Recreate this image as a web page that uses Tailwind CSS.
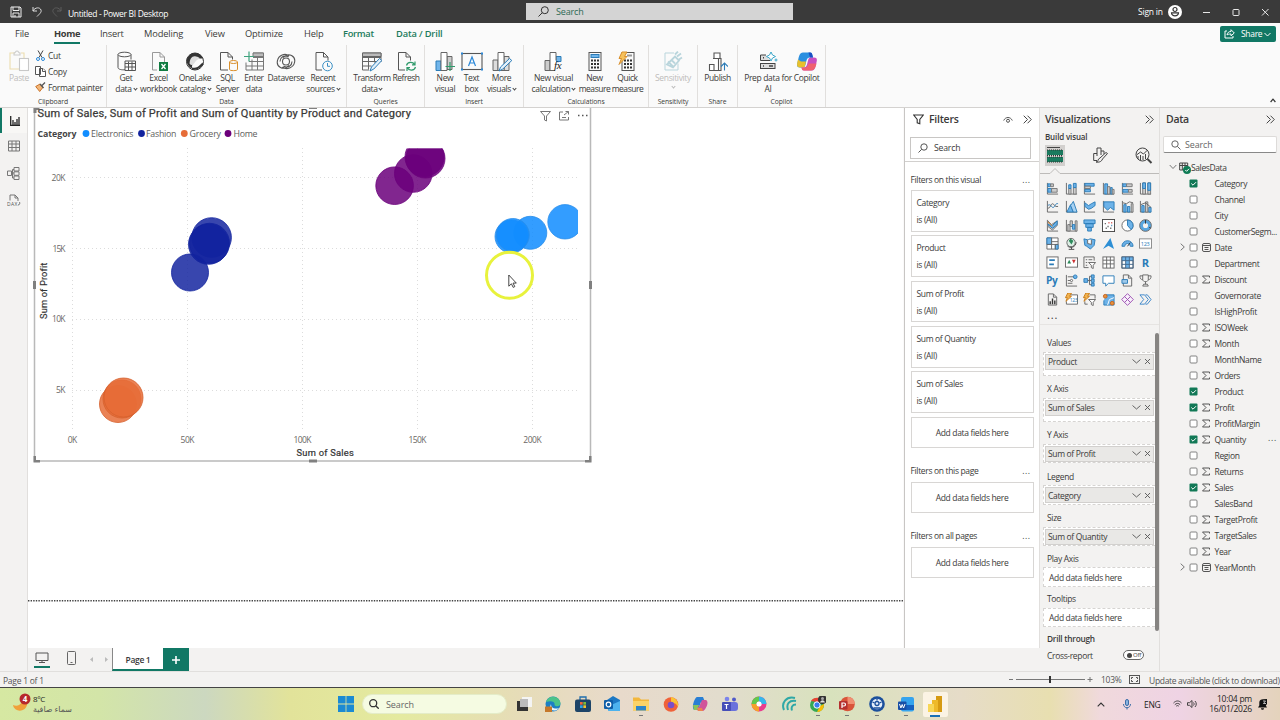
<!DOCTYPE html>
<html lang="en">
<head>
    <meta charset="UTF-8">
    <meta name="viewport" content="width=device-width, initial-scale=1.0">
    <title>Untitled - Power BI Desktop</title>
    <script src="https://cdn.jsdelivr.net/npm/@tailwindcss/browser@4"></script>
</head>
<body class="w-[1280px] h-[720px] overflow-hidden flex flex-col bg-[#f3f2f1] text-[#3b3a39] text-[8.500px] leading-[11px] tracking-[-0.340px] font-['Open_Sans','Noto_Sans',sans-serif]">

    <!-- Title bar -->
    <header class="relative h-[23px] shrink-0 bg-[#3a3a3a] text-white flex items-center">
        <svg class="ml-[10px] w-[12px] h-[12px]" viewBox="0 0 12 12" fill="none" stroke="#eee" stroke-width="1"><path d="M1 1h9l1 1v9H1zM3 1v3.500h6V1M3 11V7h6v4M5 9v2"/></svg>
        <svg class="ml-[10px] w-[10px] h-[12px]" viewBox="0 0 10 12" fill="none" stroke="#ddd" stroke-width="1"><path d="M1 1v4h4M1 5c2-4 7-4 8-1 .6 2-.5 3-4 6.500"/></svg>
        <svg class="ml-[10px] w-[10px] h-[12px]" viewBox="0 0 10 12" fill="none" stroke="#5c5c5c" stroke-width="1"><path d="M9 1v4H5M9 5C7 1 2 1 1 4c-.6 2 .5 3 4 6.500"/></svg>
        <span class="ml-[6px] mt-[3px] w-[99px] text-[8.500px] tracking-[-0.330px] whitespace-nowrap">Untitled - Power BI Desktop</span>
        <div class="ml-[359px] w-[267px] h-[17px] bg-[#d4d4d4] flex items-center text-[#2d6a55] text-[9px] tracking-[-0.150px]">
            <svg class="ml-[12px] mr-[7px] w-[11px] h-[11px]" viewBox="0 0 11 11" fill="none" stroke="#333" stroke-width="1"><circle cx="6.800" cy="4.200" r="3.500"/><path d="M4.300 6.700L.5 10.500"/></svg>
            Search
        </div>
        <span class="ml-[345px] w-[25px] tracking-[-0.200px] whitespace-nowrap">Sign in</span>
        <svg class="ml-[5px] w-[14px] h-[14px]" viewBox="0 0 14 14"><circle cx="7" cy="7" r="7" fill="#fff"/><g fill="none" stroke="#333" stroke-width="1.200"><circle cx="7" cy="4.500" r="2"/><path d="M3.500 7.800h7c.2 4-7.200 4-7 0z"/></g></svg>
        <svg class="ml-[20px] w-[70px] h-[10px]" viewBox="0 0 70 10" fill="none" stroke="#e8e8e8" stroke-width="1"><path d="M1 5.500h7M60 2l6.500 6.500M66.500 2L60 8.500"/><rect x="31" y="2.500" width="6" height="6" rx=".8"/></svg>
    </header>

    <!-- Ribbon -->
    <section class="h-[85px] shrink-0 bg-[#fafafa] border-b border-[#d4d2d0] flex flex-col">
        <nav class="relative h-[22px] flex items-center text-[9.300px] leading-[20px] tracking-[-0.150px] whitespace-nowrap">
            <span class="ml-[15px] w-[39px]">File</span>
            <span class="w-[46px] font-bold tracking-[-0.300px]"><span class="inline-block w-[26px] h-[20px] border-b-2 border-[#117865]">Home</span></span>
            <span class="w-[44px] tracking-[-0.250px]">Insert</span>
            <span class="w-[61px]">Modeling</span>
            <span class="w-[40px]">View</span>
            <span class="w-[59px]">Optimize</span>
            <span class="w-[39px]">Help</span>
            <span class="w-[53px] font-semibold tracking-[-0.300px] text-[#217a5b]">Format</span>
            <span class="font-semibold text-[#217a5b]">Data / Drill</span>
            <div class="ml-auto mr-[4px] w-[56px] h-[16px] rounded-[2px] bg-[#117865] text-white text-[8.500px] flex items-center">
                <svg class="ml-[4px] mr-[6px] w-[11px] h-[10px]" viewBox="0 0 11 10" fill="none" stroke="#fff" stroke-width="1"><path d="M3 2H1v7h8V7M3 6c.4-2.600 2-3.500 4-3.500V.7L10.300 4 7 6.800V5C5 5 4 5.200 3 6z"/></svg>
                <span class="w-[20px] tracking-[-0.300px]">Share</span>
                <svg class="ml-[3px] w-[7px] h-[5px]" viewBox="0 0 7 5" fill="none" stroke="#fff" stroke-width="1"><path d="M.5 1l3 3 3-3"/></svg>
            </div>
        </nav>
        <div class="relative h-[62px] flex text-center whitespace-nowrap">
            <!-- Clipboard -->
            <div class="w-[107px] border-r border-[#e1dfdd] flex flex-col">
                <div class="h-[52px] flex">
                    <div class="ml-[5px] w-[28px] pt-[5px] flex flex-col items-center text-[#bebcba]">
                        <svg class="w-[22px] h-[22px]" viewBox="0 0 22 22" fill="none" stroke-width="1.100"><path d="M7 3H2v16h9M13 3h3v5" stroke="#ecdcae"/><path d="M6 5V3c2 0 1-2 3-2s1 2 3 2v2z" stroke="#ccc"/><rect x="11.500" y="8.500" width="9" height="12" stroke="#c8c8c8" fill="#fff"/></svg>
                        <span>Paste</span>
                    </div>
                    <div class="ml-[2px] pt-[2px] flex flex-col text-left">
                        <div class="h-[16px] flex items-center"><svg class="w-[11px] h-[11px] mr-[2px]" viewBox="0 0 11 11" fill="none" stroke-width="1"><path d="M3 .5l4 7M8 .5l-4 7" stroke="#444"/><circle cx="3" cy="9" r="1.500" stroke="#2b88d8"/><circle cx="8" cy="9" r="1.500" stroke="#2b88d8"/></svg>Cut</div>
                        <div class="h-[16px] flex items-center"><svg class="w-[11px] h-[11px] mr-[2px]" viewBox="0 0 11 11" fill="#fff" stroke="#555" stroke-width="1"><path d="M.5.5h5v8h-5zM4.500 2.500h3.500l2.500 2.500v5.500h-6z"/><path d="M7.500 2.500V5.500h3"/></svg>Copy</div>
                        <div class="h-[16px] flex items-center"><svg class="w-[11px] h-[11px] mr-[2px]" viewBox="0 0 11 11" fill="#f3b678" stroke="#c56a1c" stroke-width=".9"><path d="M.7 4.500l4 5 3.500-4.500L5 2z"/><path d="M5 2l3.500 4M7 3.500l3-3" stroke="#555" stroke-width="1.300"/></svg>Format painter</div>
                    </div>
                </div>
                <span class="pt-[1px] text-[6.800px] leading-[10px] tracking-[-0.100px]">Clipboard</span>
            </div>
            <!-- Data -->
            <div class="w-[240px] border-r border-[#e1dfdd] flex flex-col">
                <div class="h-[52px] pl-[3px] pt-[6px] flex">
                    <div class="w-[32px] flex flex-col items-center"><svg class="w-[20px] h-[21px] shrink-0" viewBox="0 0 20 20" fill="#fafafa" stroke="#555" stroke-width="1"><path d="M2 3v13c0 2 4 2.500 7 2.300M15 3v5"/><ellipse cx="8.500" cy="3" rx="6.500" ry="2.300"/><path d="M9 9.500h10.500v9.500H9z"/><path d="M9 12h10.500M9 15.500h10.500M12.500 10v9M16 10v9"/></svg><span>Get<br>data<i class="inline-block ml-[2px] mb-[2px] w-[3px] h-[3px] border-r border-b border-[#444] rotate-45"></i></span></div>
                    <div class="w-[33px] flex flex-col items-center"><svg class="w-[20px] h-[21px] shrink-0" viewBox="0 0 20 20" fill="none" stroke="#999" stroke-width="1"><path d="M8 18.500H3.500V1H11l4.500 4.500v6"/><path d="M11 1v4.500h4.500"/><rect x="10" y="10.500" width="9" height="9" fill="#107c41" stroke="none"/><path d="M12.500 12.500l4 5M16.500 12.500l-4 5" stroke="#fff" stroke-width="1.300"/></svg><span>Excel<br>workbook</span></div>
                    <div class="w-[40px] flex flex-col items-center"><svg class="w-[20px] h-[21px] shrink-0" viewBox="0 0 20 20" fill="none"><circle cx="10" cy="10" r="8.500" fill="#fafafa" stroke="#333"/><path d="M5 3c5-3 11-1 13 4-4 0-6 0-8 2-3 3-3 5-3 8C3 15 1 11 2 7z" fill="#333"/><path d="M11 5c-4-1-6 2-6.500 7 1.500 2 3 2 4.500 0 2-2 2-4 6-5-1-1-2-2-4-2z" fill="#ddd"/><path d="M7 17c5 1 7-1 11-5" stroke="#333" stroke-width="2"/></svg><span>OneLake<br>catalog<i class="inline-block ml-[2px] mb-[2px] w-[3px] h-[3px] border-r border-b border-[#444] rotate-45"></i></span></div>
                    <div class="w-[25px] flex flex-col items-center"><svg class="w-[20px] h-[21px] shrink-0" viewBox="0 0 20 20" fill="none" stroke="#555" stroke-width="1"><path d="M10 18.500H2.500V1H10l4.500 4.500V8M10 1v4.500h4.500"/><path d="M11.500 10.500v7.500c0 1.500 8 1.500 8 0v-7.500" stroke="#d98f2b"/><ellipse cx="15.500" cy="10.500" rx="4" ry="1.500" stroke="#d98f2b"/></svg><span>SQL<br>Server</span></div>
                    <div class="w-[28px] flex flex-col items-center"><svg class="w-[20px] h-[21px] shrink-0" viewBox="0 0 20 20" fill="none" stroke="#777" stroke-width="1"><path d="M9 1.500h10.500v17H2V11M19.500 6H9M19.500 10H5M19.500 14.500H2M8 8v10.500M13.500 5v13.500"/><path d="M9 1.500h10.500V5H9z" fill="#bbb"/><path d="M5 0v10M0 5h10" stroke="#3fa37e" stroke-width="1.200"/></svg><span>Enter<br>data</span></div>
                    <div class="w-[36px] flex flex-col items-center"><svg class="w-[20px] h-[21px] shrink-0" viewBox="0 0 20 20" fill="none" stroke="#555" stroke-width="1.100"><circle cx="10" cy="10" r="3.500"/><path d="M13 14C7 20 0 15 1.500 9 2.500 4 9 1 13 4.500M7 6c6-6 13-1 11.500 5-1 5-8 8-12 4.500M4 10c0-4 4-7 8.500-4.500M16 10c0 4-4 7-8.500 4.500"/></svg><span>Dataverse</span></div>
                    <div class="w-[38px] flex flex-col items-center"><svg class="w-[20px] h-[21px] shrink-0" viewBox="0 0 20 20" fill="none" stroke="#555" stroke-width="1"><path d="M9 18.500H3V1h7.500L15 5.500V9M10.500 1v4.500H15"/><circle cx="14.500" cy="14.500" r="4.800" fill="#fafafa" stroke="#3a8fc4"/><path d="M14.500 11.500v3.300h2.500" stroke="#3a8fc4"/></svg><span>Recent<br>sources<i class="inline-block ml-[2px] mb-[2px] w-[3px] h-[3px] border-r border-b border-[#444] rotate-45"></i></span></div>
                </div>
                <span class="pt-[1px] text-[6.800px] leading-[10px] tracking-[-0.100px]">Data</span>
            </div>
            <!-- Queries -->
            <div class="w-[78px] border-r border-[#e1dfdd] flex flex-col">
                <div class="h-[52px] pl-[5px] pt-[6px] flex">
                    <div class="w-[40px] flex flex-col items-center"><svg class="w-[20px] h-[21px] shrink-0" viewBox="0 0 20 20" fill="none" stroke="#666" stroke-width="1"><path d="M.5 1.500h18.500v9M.5 1.500v17H7M.5 6H19M.5 10h14M.5 14.500h9M6.500 5v13M12.500 5v6"/><path d="M.5 1.500H19V5H.5z" fill="#bbb"/><path d="M8 19.500l1.500-4L17.500 7l2.300 2-8 8.500z" fill="#e3f0fa" stroke="#2b7cb8"/></svg><span class="tracking-[-0.450px]">Transform<br>data<i class="inline-block ml-[2px] mb-[2px] w-[3px] h-[3px] border-r border-b border-[#444] rotate-45"></i></span></div>
                    <div class="w-[28px] flex flex-col items-center"><svg class="w-[20px] h-[21px] shrink-0" viewBox="0 0 20 20" fill="none" stroke="#555" stroke-width="1"><path d="M9 18.500H2.500V1H10l4.500 4.500V9M10 1v4.500h4.500"/><path d="M10.500 14c1-4 6.500-4 8-1M19 10v3.300h-3M19.500 15.500c-1 4-6.500 4-8 1M11 19.500v-3.300h3" stroke="#2f9a6b" stroke-width="1.200"/></svg><span class="tracking-[-0.450px]">Refresh</span></div>
                </div>
                <span class="pt-[1px] text-[6.800px] leading-[10px] tracking-[-0.100px]">Queries</span>
            </div>
            <!-- Insert -->
            <div class="w-[99px] border-r border-[#e1dfdd] flex flex-col">
                <div class="h-[52px] pl-[6px] pt-[6px] flex">
                    <div class="w-[28px] flex flex-col items-center"><svg class="w-[20px] h-[21px] shrink-0" viewBox="0 0 20 20" fill="none" stroke="#666" stroke-width="1"><path d="M1 9.500h5v9.500H1z" fill="#71b5ea" stroke="#2b7cb8"/><path d="M12 5h5v13h-5z" fill="#ccc"/><path d="M6 1h6v18H6z" fill="#fff"/><path d="M15 10.500v9M10.500 15h9.500" stroke="#2f9a6b" stroke-width="1.200"/></svg><span>New<br>visual</span></div>
                    <div class="w-[25px] flex flex-col items-center"><svg class="w-[22px] h-[21px] shrink-0" viewBox="0 0 22 20" fill="none" stroke="#555" stroke-width="1.100"><rect x="1" y="2" width="20" height="16"/><path d="M7.500 14.500L11 5.500l3.500 9M8.700 11.500h4.600" stroke="#2b88d8" stroke-width="1.200"/><path d="M0 1h2v2H0zM20 1h2v2h-2zM0 17h2v2H0zM20 17h2v2h-2z" fill="#2b88d8" stroke="none"/></svg><span>Text<br>box</span></div>
                    <div class="w-[35px] flex flex-col items-center"><svg class="w-[20px] h-[21px] shrink-0" viewBox="0 0 20 20" fill="none" stroke="#666" stroke-width="1"><path d="M1 8.500h5v10.500H1z" fill="#ddd"/><path d="M12 5h5v14h-5z" fill="#ddd"/><path d="M6 1h6v18H6z" fill="#fff"/><path d="M7 19.500l1.500-4L17.500 7l2.300 2-9 8.500z" fill="#e3f0fa" stroke="#2b7cb8"/></svg><span>More<br>visuals<i class="inline-block ml-[2px] mb-[2px] w-[3px] h-[3px] border-r border-b border-[#444] rotate-45"></i></span></div>
                </div>
                <span class="pt-[1px] text-[6.800px] leading-[10px] tracking-[-0.100px]">Insert</span>
            </div>
            <!-- Calculations -->
            <div class="w-[125px] border-r border-[#e1dfdd] flex flex-col">
                <div class="h-[52px] pl-[5px] pt-[6px] flex">
                    <div class="w-[49px] flex flex-col items-center"><svg class="w-[20px] h-[21px] shrink-0" viewBox="0 0 20 20" fill="none" stroke="#666" stroke-width="1"><path d="M1 9h5v10H1z" fill="#ccc"/><path d="M12 5h5v5h-5z" fill="#71b5ea" stroke="#2b7cb8"/><path d="M11 19H6V1h6v8" fill="#fff"/><text x="10" y="17.500" font-size="11" font-style="italic" font-family="Liberation Serif" fill="#222" stroke="none">fx</text></svg><span>New visual<br>calculation<i class="inline-block ml-[2px] mb-[2px] w-[3px] h-[3px] border-r border-b border-[#444] rotate-45"></i></span></div>
                    <div class="w-[33px] flex flex-col items-center"><svg class="w-[20px] h-[21px] shrink-0" viewBox="0 0 20 20" fill="none" stroke="#555" stroke-width="1"><rect x="4" y="1" width="12" height="18"/><rect x="6" y="3" width="8" height="3" fill="#71b5ea" stroke="#2b7cb8"/><path d="M6 9h8M6 12.500h8M6 16h8" stroke="#333" stroke-width="2" stroke-dasharray="2 1"/></svg><span class="tracking-[-0.450px]">New<br>measure</span></div>
                    <div class="w-[33px] flex flex-col items-center"><svg class="w-[20px] h-[21px] shrink-0" viewBox="0 0 20 20" fill="none" stroke="#555" stroke-width="1"><rect x="4" y="1" width="12" height="18"/><path d="M9 4h5" stroke="#999" stroke-width="2"/><path d="M6 9h8M6 12.500h8M6 16h8" stroke="#333" stroke-width="2" stroke-dasharray="2 1"/><path d="M4 .5h5L6.500 5H9L1 13l2.500-6H1z" fill="#f6c15c" stroke="#d98f2b"/></svg><span class="tracking-[-0.450px]">Quick<br>measure</span></div>
                </div>
                <span class="pt-[1px] text-[6.800px] leading-[10px] tracking-[-0.100px]">Calculations</span>
            </div>
            <!-- Sensitivity -->
            <div class="w-[49px] border-r border-[#e1dfdd] flex flex-col">
                <div class="h-[52px] pt-[6px] flex flex-col items-center text-[#bebcba]">
                    <svg class="w-[20px] h-[21px] shrink-0" viewBox="0 0 20 20" fill="none" stroke="#b9d5dc" stroke-width="1"><path d="M11 1.500H2v17h13V12"/><path d="M4 13l8-8 4 4-6 7zM5 10l5 5M8 8l4 4M12 3l3-3M14 5l4-3M16 8l3-2" stroke-width="1.800"/></svg>
                    <span>Sensitivity</span><i class="mt-[2px] w-[3px] h-[3px] border-r border-b border-[#bbb] rotate-45"></i>
                </div>
                <span class="pt-[1px] text-[6.800px] leading-[10px] tracking-[-0.100px]">Sensitivity</span>
            </div>
            <!-- Share -->
            <div class="w-[40px] border-r border-[#e1dfdd] flex flex-col">
                <div class="h-[52px] pt-[6px] flex flex-col items-center">
                    <svg class="w-[20px] h-[21px] shrink-0" viewBox="0 0 20 20" fill="#fff" stroke="#555" stroke-width="1.100"><path d="M1.500 13h4.500v6H1.500zM5 7h5.500v12H6M6 6.500V1.500h6v5M10.500 7H13v12h-3"/><path d="M16.500 19v-7M13 15l3.500-3.500L20 15" fill="none" stroke="#2b7cb8"/></svg>
                    <span>Publish</span>
                </div>
                <span class="pt-[1px] text-[6.800px] leading-[10px] tracking-[-0.100px]">Share</span>
            </div>
            <!-- Copilot -->
            <div class="w-[88px] border-r border-[#e1dfdd] flex flex-col">
                <div class="h-[52px] pl-[5px] pt-[6px] flex">
                    <div class="w-[50px] flex flex-col items-center"><svg class="w-[20px] h-[21px] shrink-0" viewBox="0 0 20 20" fill="#ddd" stroke="#444" stroke-width="1"><path d="M8 3.500H2.500V9H12"/><rect x="2.500" y="12" width="14.500" height="5"/><path d="M5 6.300h1M11 14.500h4M5 14.500h1" stroke-width="1.400"/><path d="M13 .5l1.500 3 3 1.500-3 1.500-1.500 3-1.500-3-3-1.500 3-1.500zM18 7v3M16.500 8.500h3" fill="#fff" stroke="#3aa6c9"/></svg><span>Prep data for<br>AI</span></div>
                    <div class="w-[27px] flex flex-col items-center"><svg class="w-[22px] h-[21px] shrink-0" viewBox="0 0 22 20"><path d="M7 1h7c2 0 2 1 2.500 3l.5 2h-3c-2 0-3 1-3.500 3l-1 4c-.5 2-1 3-3 3H4c-4 0-3-3-2-7S3.500 1 7 1z" fill="#2a8fe0"/><path d="M2 8c-1 4-2 8 2 8h3c2 0 2-2 3-6H5z" fill="#e8c02c"/><path d="M15 19H8c-2 0-2-1-2.500-3h2c2 0 3-1 3.500-3l1-4c.5-2 1-3 3-3h3c4 0 3 3 2 7s-1.500 6-5 6z" fill="#c74fc0"/><path d="M20.500 12c-1 4-2 7-5.500 7H8c-2 0-2-1-2.500-3H9c3 0 3-4 4-4z" fill="#f0626f"/><path d="M12.500 1H14c2 0 2 1 2.500 3l.5 2h-3z" fill="#1a4fc4"/></svg><span>Copilot</span></div>
                </div>
                <span class="pt-[1px] text-[6.800px] leading-[10px] tracking-[-0.100px]">Copilot</span>
            </div>
            <svg class="ml-auto mt-[53px] mr-[4px] w-[6px] h-[5px]" viewBox="0 0 6 5" fill="none" stroke="#333" stroke-width="1.200"><path d="M.6 4L3 1.200 5.400 4"/></svg>
        </div>
    </section>

    <!-- Workspace -->
    <main class="h-[563px] shrink-0 flex">
        <aside class="w-[28px] shrink-0 border-r border-[#e1dfdd] flex flex-col items-center">
            <div class="w-full h-[25px] border-l-2 border-[#117865] bg-[#f8f7f5] flex items-center justify-center"><svg class="w-[10px] h-[10px]" viewBox="0 0 10 10" stroke="#222" stroke-width="1.300" fill="none"><path d="M.7 0v9.300H10M3 9V4M5 9V6M7 9V3M9 9V1"/></svg></div>
            <svg class="mt-[7px] w-[12px] h-[12px]" viewBox="0 0 12 12" fill="none" stroke="#777" stroke-width="1"><path d="M.5 1h11v10H.5zM.5 4h11M.5 7.500h11M4 1v10M8 1v10"/></svg>
            <svg class="mt-[15px] w-[13px] h-[13px]" viewBox="0 0 13 13" fill="none" stroke="#777" stroke-width="1"><path d="M7 .5h5v3.500H7zM7 4.800h5v3.500H7zM7 9h5v3.500H7zM.5 4h4v4.500h-4zM4.500 6H7M5.500 2.500H7M5.500 2.500v8.500H7"/></svg>
            <svg class="mt-[14px] w-[14px] h-[13px]" viewBox="0 0 14 13" fill="none" stroke="#777" stroke-width="1"><path d="M3 6.500V1h5l3 3v3M8 1v3h3"/><text x="0" y="11.500" font-size="5" fill="#555" stroke="none" font-family="Open Sans" textLength="10">DAX</text><path d="M11 11c2 0 2-2 1.500-3"/></svg>
        </aside>

        <section class="w-[877px] shrink-0 flex flex-col">
            <!-- Scatter chart on the report canvas -->
            <svg class="w-[877px] h-[540px] bg-white" viewBox="28 108 877 540" font-family="Roboto, 'Open Sans', sans-serif">
                <defs><clipPath id="plot"><rect x="72" y="148.500" width="506" height="283"/></clipPath></defs>
                <path d="M34.500 108v353H590.500V108" fill="none" stroke="#b9b9b9" stroke-width="1.500"/>
                <g fill="#808080"><path d="M33.500 107h6v3h-3v3h-3zM309 107h8v2h-8zM33.500 456h2.500v4h4v2.500h-6.500zM309 459.500h8v3h-8zM591.500 456v6.500h-6.500v-2.500h4V456zM33 281h3v8h-3zM589 281h3v8h-3z"/></g>
                <text x="37.500" y="117.300" font-size="11" font-weight="400" fill="#3a3938" stroke="#3a3938" stroke-width=".25" textLength="373" lengthAdjust="spacing">Sum of Sales, Sum of Profit and Sum of Quantity by Product and Category</text>
                <g fill="none" stroke="#777" stroke-width="1"><path d="M540.500 111.500h10l-4 4.500v5l-2-1v-4z"/><path d="M563 112h-3.500v8h9v-3M562 117.500h4M564 115l4.500-3.500M565.500 111.500h3v3"/></g>
                <path d="M578 115.500h1.500M582 115.500h1.500M586 115.500h1.500" stroke="#555" stroke-width="1.400"/>
                <g font-family="'Open Sans', sans-serif" font-size="8.800" fill="#605e5c" letter-spacing="0">
                    <text x="37.500" y="136.500" font-weight="700" fill="#444" textLength="39">Category</text>
                    <circle cx="86" cy="133.500" r="3.400" fill="#118dff"/><text x="91" y="136.500" textLength="42.500">Electronics</text>
                    <circle cx="141.500" cy="133.500" r="3.400" fill="#12239e"/><text x="146" y="136.500" textLength="30.500">Fashion</text>
                    <circle cx="184.300" cy="133.500" r="3.400" fill="#e66c37"/><text x="189.500" y="136.500" textLength="31.500">Grocery</text>
                    <circle cx="228" cy="133.500" r="3.400" fill="#6b007b"/><text x="233.500" y="136.500" textLength="24">Home</text>
                </g>
                <g stroke="#dcdcdc" stroke-width="1" stroke-dasharray="1 3"><path d="M72.500 148v282M187.500 148v282M302.500 148v282M417.500 148v282M532.500 148v282M72 177.500h506M72 248.500h506M72 319.500h506M72 390.500h506"/></g>
                <g font-family="'Open Sans', sans-serif" font-size="8.500" fill="#6a6866" letter-spacing="0">
                    <g text-anchor="end"><text x="65.500" y="180.800" textLength="14">20K</text><text x="65.500" y="251.500" textLength="13">15K</text><text x="65.500" y="322.300" textLength="13.500">10K</text><text x="65.500" y="393" textLength="9.500">5K</text></g>
                    <g text-anchor="middle"><text x="72.500" y="443.300" textLength="9.500">0K</text><text x="187.500" y="443.300" textLength="14">50K</text><text x="302.500" y="443.300" textLength="18">100K</text><text x="417.500" y="443.300" textLength="18">150K</text><text x="532.500" y="443.300" textLength="18.500">200K</text></g>
                </g>
                <g font-size="9.300" fill="#333" stroke="#333" stroke-width=".2" text-anchor="middle">
                    <text x="325" y="456" textLength="57">Sum of Sales</text>
                    <text transform="translate(46.500 291) rotate(-90)" textLength="56">Sum of Profit</text>
                </g>
                <g clip-path="url(#plot)" stroke-width=".8">
                    <g fill="#e66c37" stroke="#d65f2c" fill-opacity=".85"><circle cx="118" cy="404" r="18.500"/><circle cx="122" cy="399" r="19"/><circle cx="123.500" cy="397.500" r="19.500"/></g>
                    <g fill="#12239e" stroke="#12239e" fill-opacity=".84"><circle cx="190" cy="272.500" r="18.500"/><circle cx="211.600" cy="237.500" r="19.800"/><circle cx="208.500" cy="244.300" r="20"/><circle cx="209.500" cy="243.300" r="20"/></g>
                    <g fill="#6b007b" stroke="#6b007b" fill-opacity=".85"><circle cx="394.600" cy="185.700" r="18.800"/><circle cx="413.300" cy="173.500" r="18.800"/><circle cx="424.500" cy="157" r="19.500"/><circle cx="425.500" cy="158.500" r="19.500"/></g>
                    <g fill="#118dff" stroke="#2b8eea" fill-opacity=".86"><circle cx="565" cy="221.800" r="17.200"/><circle cx="530.300" cy="232.800" r="16.500"/><circle cx="511.500" cy="236.500" r="16.500"/><circle cx="512.800" cy="235" r="16.500"/></g>
                </g>
                <!-- pointer highlight -->
                <circle cx="509.500" cy="275.300" r="23" fill="none" stroke="#e8f23c" stroke-width="3"/>
                <path d="M508.800 275v11.200l2.600-2.400 1.800 3.600 1.600-.8-1.800-3.500h3.300z" fill="#fff" stroke="#333" stroke-width=".9"/>
                <path d="M28 600.800h876" stroke="#444" stroke-width="1.400" stroke-dasharray="1.400 1.200"/>
                <path d="M904.500 108v540" stroke="#c8c6c4" stroke-width="1.200"/>
            </svg>
            <!-- Page tabs -->
            <div class="h-[23px] flex">
                <div class="ml-[6px] w-[16px] h-[20px] border-b-2 border-[#117865] flex justify-center"><svg class="mt-[4px] w-[14px] h-[12px]" viewBox="0 0 14 12" fill="none" stroke="#555" stroke-width="1"><path d="M1 1h12v7.500H1zM7 8.500V10M4 10.500h6"/></svg></div>
                <svg class="ml-[17px] mt-[3px] w-[9px] h-[14px]" viewBox="0 0 9 14" fill="none" stroke="#666" stroke-width="1"><rect x=".5" y=".5" width="8" height="13" rx="1"/><path d="M3.500 11.500h2"/></svg>
                <svg class="ml-[14px] mt-[9px] w-[18px] h-[5px]" viewBox="0 0 18 5" fill="#bbb"><path d="M3 0v5L0 2.500zM15 0v5l3-2.500z"/></svg>
                <div class="ml-[4px] w-[51px] pt-[2px] border-l border-b-2 border-l-[#888] border-b-[#117865] bg-white flex items-center justify-center font-semibold text-[8.500px]">Page 1</div>
                <div class="w-[26px] bg-[#117865] flex items-center justify-center"><svg class="w-[8px] h-[8px]" viewBox="0 0 8 8" stroke="#fff" stroke-width="1.600"><path d="M4 0v8M0 4h8"/></svg></div>
            </div>
        </section>

        <!-- Filters -->
        <aside class="w-[135px] shrink-0 h-[540px] bg-white border-r border-[#e1dfdd] flex flex-col">
            <div class="h-[23px] flex items-center text-[10.500px] font-semibold">
                <svg class="ml-[8px] mr-[5px] w-[11px] h-[11px]" viewBox="0 0 11 11" fill="none" stroke="#333" stroke-width="1.100"><path d="M.7 1h9.600L6.800 5.500v4.300l-2.600-1V5.500z"/></svg>
                <span class="w-[74px] tracking-[-0.250px]">Filters</span>
                <svg class="w-[10px] h-[8px]" viewBox="0 0 10 8" fill="none" stroke="#555" stroke-width="1"><path d="M.7 4.500C2.500.5 7.500.5 9.300 4.500"/><circle cx="5" cy="4.800" r="1.500"/></svg>
                <svg class="ml-[10px] w-[9px] h-[9px]" viewBox="0 0 9 9" fill="none" stroke="#444" stroke-width="1"><path d="M.7.7l3.800 3.800L.7 8.300M4.500.7l3.800 3.800-3.800 3.800"/></svg>
            </div>
            <div class="ml-[5px] mt-[6px] w-[121px] h-[22px] border border-[#c8c6c4] flex items-center text-[8.700px] tracking-[-0.200px]">
                <svg class="ml-[7px] mr-[6px] w-[10px] h-[10px]" viewBox="0 0 10 10" fill="none" stroke="#555" stroke-width="1"><circle cx="6" cy="4" r="3.200"/><path d="M3.700 6.300L.5 9.500"/></svg>Search
            </div>
            <div class="mt-[2px] border-b border-[#d2d0ce]"></div>
            <div id="filters" class="pl-[5.500px] flex flex-col whitespace-nowrap"></div>
        </aside>

        <!-- Visualizations -->
        <aside class="relative w-[120px] shrink-0 border-r border-[#e1dfdd] flex flex-col">
            <div class="h-[23px] flex items-center justify-between pl-[5px] pr-[5px] text-[10.500px] tracking-[-0.300px] font-semibold">Visualizations
                <svg class="w-[9px] h-[9px]" viewBox="0 0 9 9" fill="none" stroke="#444" stroke-width="1"><path d="M.7.7l3.800 3.800L.7 8.300M4.500.7l3.800 3.800-3.800 3.800"/></svg>
            </div>
            <div class="pl-[5px] text-[8px] tracking-[-0.150px] font-semibold">Build visual</div>
            <div class="h-[24px] mt-[1px] flex items-center">
                <svg class="ml-[5px] w-[20px] h-[21px] bg-[#d2d0ce]" viewBox="0 0 20 21"><path d="M2 2.500h13" stroke="#444" stroke-width="1"/><path d="M2 5h16v5H2zM2 12h16v5H2z" fill="#1a7a5e"/><path d="M2 5h16M2 10.500h16M2 12h16M2 17h16" stroke="#333" stroke-width="1" stroke-dasharray="1 1"/></svg>
                <svg class="ml-[28px] w-[15px] h-[16px]" viewBox="0 0 15 16" fill="none" stroke="#444" stroke-width="1"><path d="M4 13.500H.7V6.500H4M4 9V1h4v7M8 4h3v3M3 15c3 0 1-3 4-4l6-5.500 1.500 1L9.500 12c-1 3-4 3.500-6.500 3z"/></svg>
                <svg class="ml-[27px] w-[18px] h-[17px]" viewBox="0 0 18 17" fill="none" stroke="#444" stroke-width="1"><circle cx="7.500" cy="7.500" r="6.500"/><path d="M1.500 8l4-3 3 2 4-4M3 12V9M5.500 13V8M8 13V9M10.500 12V7"/><path d="M12.500 12l4 4" stroke-width="2"/></svg>
            </div>
            <svg class="w-[119px] h-[7px] shrink-0" viewBox="0 0 119 7" fill="none" stroke="#bdbbb9" stroke-width="1"><path d="M0 6.500h10l5-5 5 5h99"/></svg>
            <div id="visuals" class="ml-[4px] mt-[5px] w-[112px] grid grid-cols-6 gap-y-[0.600px]"></div>
            <div class="h-[14px] mt-[1px] pl-[7px] leading-[9px] text-[11px] tracking-[0.800px]">...</div>
            <div class="border-t border-[#e6e4e2]"></div>
            <div id="wells" class="absolute left-0 top-[226px] w-[115px] flex flex-col whitespace-nowrap"></div>
            <div class="absolute right-0 top-[225px] w-[4px] h-[298px] rounded-full bg-[#868482]"></div>
        </aside>

        <!-- Data -->
        <aside class="w-[120px] shrink-0 flex flex-col">
            <div class="h-[23px] flex items-center justify-between pl-[6px] pr-[5px] text-[10.500px] tracking-[-0.300px] font-semibold">Data
                <svg class="w-[9px] h-[9px]" viewBox="0 0 9 9" fill="none" stroke="#444" stroke-width="1"><path d="M.7.7l3.800 3.800L.7 8.300M4.500.7l3.800 3.800-3.800 3.800"/></svg>
            </div>
            <div class="ml-[3px] mt-[5px] w-[114px] h-[17px] rounded-[2px] bg-white border border-[#dddbd9] border-b-[#888] flex items-center text-[8.900px] tracking-[-0.100px] text-[#666]">
                <svg class="ml-[7px] mr-[4px] w-[10px] h-[10px]" viewBox="0 0 10 10" fill="none" stroke="#666" stroke-width="1"><circle cx="4" cy="4" r="3.200"/><path d="M6.300 6.300l3.200 3.200"/></svg>Search
            </div>
            <div class="mt-[6px] h-[16px] flex items-center">
                <svg class="ml-[9px] w-[8px] h-[6px]" viewBox="0 0 8 6" fill="none" stroke="#777"><path d="M.7 1l3.300 3.500L7.300 1"/></svg>
                <svg class="ml-[2px] w-[13px] h-[14px]" viewBox="0 0 13 14" fill="none" stroke="#444" stroke-width="1"><path d="M.7 3h8v7h-8zM.7 5.500h8M3.300 3v7M6 3v7"/><circle cx="8" cy="10" r="4" fill="#107c56" stroke="none"/><path d="M6.300 10l1.300 1.300L10 8.800" stroke="#fff"/></svg>
                <span class="-ml-[1px] tracking-[-0.380px]">SalesData</span>
            </div>
            <div id="fields" class="flex flex-col"></div>
        </aside>
    </main>

    <!-- Status bar -->
    <footer class="h-[17px] shrink-0 border-t border-[#e1dfdd] border-b-[1.500px] border-b-[#444] bg-[#f3f2f1] flex items-center tracking-[-0.250px] text-[#555] whitespace-nowrap">
        <span class="ml-[3px] pt-[1px]">Page 1 of 1</span>
        <svg class="ml-auto w-[84px] h-[9px]" viewBox="0 0 84 9" stroke="#555" stroke-width="1" fill="none"><path d="M0 4.500h4M7 4.500h69M78.500 4.500h5M81 2v5" stroke="#777"/><path d="M41 1v7" stroke="#333" stroke-width="2"/></svg>
        <span class="ml-[8px] w-[20px]">103%</span>
        <svg class="ml-[8px] w-[11px] h-[9px]" viewBox="0 0 11 9" fill="none" stroke="#555"><rect x=".5" y=".5" width="10" height="8"/><path d="M2.500 4V2.500H4M7 2.500h1.500V4M2.500 5v1.500H4M7 6.500h1.500V5"/></svg>
        <span class="ml-[9px] mr-[2px] w-[129px] pt-[1px] tracking-[-0.320px]">Update available (click to download)</span>
    </footer>

    <!-- Taskbar -->
    <footer class="h-[32px] shrink-0 flex items-center text-[#222] bg-[linear-gradient(90deg,#d6e8a2_0,#d3e5a8_100px,#ccd8c0_205px,#e2e39a_290px,#e4eaa0_400px,#e6dcb8_520px,#e8dacb_620px,#e2dccd_720px,#d8e2bd_830px,#e6dcc8_960px,#e8dfb0_1050px,#f0d9dc_1100px,#efd3e4_1180px,#e4d3bc_1280px)]">
        <svg class="ml-[13px] w-[20px] h-[22px]" viewBox="0 0 20 22"><path d="M0 12c4 2 7 0 9-3 3 0 6 0 5 3-2 8-13 7-14 0z" fill="#f0a03a"/><circle cx="12" cy="6" r="5.500" fill="#b7282c"/><text x="9.700" y="9" font-size="8" font-weight="700" font-family="Open Sans" fill="#fff">4</text></svg>
        <div class="w-[60px] text-[8px] leading-[11px]"><div>8°C</div><div class="text-[#555] text-[7.900px] tracking-normal w-[40px] whitespace-nowrap font-['Noto_Sans','DejaVu_Sans',sans-serif]">سماء صافية</div></div>
        <svg class="ml-[245px] w-[16px] h-[16px]" viewBox="0 0 16 16"><path d="M0 0h7.600v7.600H0zM8.400 0H16v7.600H8.400zM0 8.400h7.600V16H0zM8.400 8.400H16V16H8.400z" fill="#1b8ad3"/></svg>
        <div class="ml-[8px] w-[145px] h-[20px] rounded-full bg-[#f5fbe2] border border-[#e4ecc8] flex items-center text-[9px] tracking-[-0.100px] text-[#666]">
            <svg class="ml-[6px] mr-[7px] w-[10px] h-[10px]" viewBox="0 0 10 10" fill="none" stroke="#333" stroke-width="1.300"><circle cx="4.200" cy="4.200" r="3.500"/><path d="M6.700 6.700l3 3"/></svg>Search
        </div>
        <div id="apps" class="ml-[2px] flex items-center"></div>
        <div class="ml-auto mr-[13px] flex items-center">
            <svg class="mr-[18px] w-[8px] h-[5px]" viewBox="0 0 8 5" fill="none" stroke="#333" stroke-width="1.100"><path d="M.7 4.300L4 1l3.300 3.300"/></svg>
            <svg class="mr-[13px] w-[8px] h-[11px]" viewBox="0 0 8 11" fill="none" stroke="#3c6ea8" stroke-width="1"><rect x="2.500" y=".5" width="3" height="6" rx="1.500" fill="#8ab4e0"/><path d="M.5 5c0 5 7 5 7 0M4 8.500v2"/></svg>
            <span class="mr-[13px] w-[16px] tracking-[-0.250px]">ENG</span>
            <svg class="mr-[5px] w-[9px] h-[8px]" viewBox="0 0 9 8" fill="none" stroke="#333" stroke-width=".9"><path d="M.5 3C3 .3 6 .3 8.500 3M1.800 4.700c1.700-1.700 3.700-1.700 5.400 0M3.200 6.200c.8-.8 1.800-.8 2.600 0"/></svg>
            <svg class="mr-[12px] w-[10px] h-[8px]" viewBox="0 0 10 8" fill="none" stroke="#333" stroke-width=".9"><path d="M.5 2.700h2L5 .5v7L2.500 5.300h-2zM6.500 2.500c.8 1 .8 2 0 3M8 1c1.700 2 1.700 4 0 6"/></svg>
            <div class="mr-[6px] w-[43px] flex flex-col items-end leading-[10.500px] tracking-[-0.230px] whitespace-nowrap"><div>10:04 pm</div><div>16/01/2026</div></div>
            <svg class="w-[9px] h-[11px]" viewBox="0 0 9 11" fill="#111"><path d="M0 8.500l1.300-2V3.500C1.300 1 3 .3 5 .3L9 0v5L7.800 6.500 9 8.500zM3 9.300h3c0 2-3 2-3 0z"/><path d="M5 2h2.500L5.500 4.500H8" stroke="#fff" stroke-width=".7" fill="none"/></svg>
        </div>
    </footer>

    <script>
        // Filters pane
        const card = (name) => `<div class="w-[123px] h-[41.500px] mb-[3.850px] border border-[#d8d6d4] pl-[5px] pt-[6px] flex flex-col gap-[6px]"><span>${name}</span><span>is (All)</span></div>`;
        const heading = (text) => `<div class="w-[120px] flex items-center justify-between"><span>${text}</span><span class="tracking-[0.500px]">...</span></div>`;
        const drop = `<div class="w-[123px] h-[31px] border border-[#d8d6d4] flex items-center justify-center">Add data fields here</div>`;
        document.getElementById("filters").innerHTML =
            `<div class="mt-[12px] mb-[5px]">${heading("Filters on this visual")}</div>` +
            ["Category", "Product", "Sum of Profit", "Sum of Quantity", "Sum of Sales"].map(card).join("") + drop +
            `<div class="mt-[17px] mb-[6px]">${heading("Filters on this page")}</div>` + drop +
            `<div class="mt-[17px] mb-[6px]">${heading("Filters on all pages")}</div>` + drop;

        // Visual gallery, one entry per icon on a 14x14 grid
        const B = 'fill="#6cb2e8" stroke="#2b7cb8"';
        const G = 'fill="#ccc" stroke="#777"';
        const axis = '<path d="M1.500 1v12H13"/>';
        const page = '<path d="M2.500 1H8l3.500 3.500V13h-9zM8 1v3.500h3.500"/>';
        const bolt = '<path d="M3 0h4L5 3.500h2L1 9l1.500-4H.5z" fill="#f2b350" stroke="#c97b18"/>';
        const visuals = [
            axis + `<path d="M2 2h3v3H2z" ${B}/><path d="M5 2h3v3H5z" ${G}/><path d="M2 7h4v4H2z" ${B}/><path d="M6 7h6v4H6z" ${G}/>`,
            axis + `<path d="M4 7h2.500v6H4z" ${G}/><path d="M4 3h2.500v4H4z" ${B}/><path d="M9 6h3v7H9z" ${G}/><path d="M9 1.500h3V6H9z" ${B}/>`,
            axis + `<path d="M2 1.500h10v3H2zM2 8h6v2.500H2z" ${B}/><path d="M2 4.500h6V7H2z" ${G}/>`,
            axis + `<path d="M3 2h3v11H3zM9 6h2v7H9z" ${B}/><path d="M6 5h2.500v8H6zM11 8h2v5h-2z" ${G}/>`,
            axis + `<path d="M2 2h4v3H2zM2 8h6v3H2z" ${B}/><path d="M6 2h6v3H6zM8 8h4v3H8z" ${G}/>`,
            axis + `<path d="M4 1h3v12H4z" ${G}/><path d="M4 1h3v6H4z" ${B}/><path d="M9.500 1h3v12h-3z" ${G}/><path d="M9.500 1h3v8h-3z" ${B}/>`,
            axis + `<path d="M2 9c3 0 3-5 5-5s2 4 6 3"/><path d="M2 6c3-3 4 3 6 2s2-5 5-4" stroke="#2b7cb8"/>`,
            axis + `<path d="M2 13l4-8 3 8z" ${B}/><path d="M6 6l3-4.500L13 13H9z" fill="#a9d2f2" stroke="#2b7cb8"/>`,
            axis + `<path d="M2 7V3l4 3 3-2 4-2v4L9 9 6 10z" ${B}/>`,
            axis + `<path d="M2 2h11v9L9 8l-3 3-4-4z" ${B}/>`,
            axis + `<path d="M3 5h2.500v8H3zM7 7h2.500v6H7z" ${B}/><path d="M11 4h2v9h-2z" ${G}/><path d="M2 3l4 1 3-2 4 1"/>`,
            axis + `<path d="M3 6h2.500v7H3zM10.500 8H13v5h-2.500z" ${B}/><path d="M7 2h2.500v11H7z" ${G}/><path d="M2 5l5-2 6 5"/>`,
            axis + `<path d="M2 2l4 4 6-4v5L7 12 2 8z" ${G}/><path d="M2 6l5 1 5-5v4l-5 4z" ${B}/><path d="M2 3l5 5" stroke="#e6913d"/>`,
            axis + `<path d="M3 6h2.500v7H3z" ${G}/><path d="M5.500 2H8v6H5.500zM11 2h2v11h-2z" ${G}/><path d="M8 6h2.500v5H8z" ${B}/>`,
            `<path d="M1 1h12v4H1zM3 5h8v4H3zM5 9h4v4H5z" ${B}/>`,
            `<rect x=".5" y=".5" width="13" height="13" fill="#fff" stroke="#444"/><path d="M3 5h1M6 8h1M4 10h1M9 10h1" stroke="#333" stroke-width="1.500"/><path d="M7 4h1M10 4h1" stroke="#c33" stroke-width="1.500"/><path d="M10 7h1" stroke="#2b7cb8" stroke-width="1.500"/>`,
            `<circle cx="7" cy="7" r="6" fill="#fff"/><path d="M7 1a6 6 0 0 1 4 10.500L7 7z" ${B}/>`,
            `<circle cx="7" cy="7" r="4.500" stroke="#58a6e0" stroke-width="3.500"/><path d="M7 1v4M11 9l2 1" stroke="#333"/><circle cx="7" cy="7" r="6.300"/>`,
            `<path d="M1 1h12v12H1z" fill="#fff"/><path d="M1 1h5v7H1zM10 8h3v5h-3z" ${B}/><path d="M6 1v12M1 8h12M10 8v5M6 5h7"/>`,
            `<circle cx="6.500" cy="6" r="4.500" fill="#dceee4"/><path d="M4 4l2-2 3 2-2 4z" fill="#2d8a5b" stroke="none"/><path d="M2.500 9.500c3 3 9 2 9.500-4M7 11v2M4 13.300h6" stroke="#444"/>`,
            `<path d="M1 2l4 1 3-1 5 1-1 6-4 4-4-3-2-1z" ${B}/><path d="M5 3v4l4 1V3" fill="#fff"/>`,
            `<path d="M9 1l4 12-6-3.500L1 13z" fill="#2d8fd5" stroke="none"/>`,
            `<path d="M1 10a6 6 0 0 1 12 0h-3a3 3 0 0 0-6 0z" ${B}/><path d="M7 10l3-4" stroke="#333"/>`,
            `<rect x=".5" y="2" width="13" height="10" fill="#fff" stroke="#888"/><text x="2" y="9.500" font-size="6" fill="#2b7cb8" stroke="none">123</text>`,
            `<rect x="1" y="1" width="12" height="12" fill="#fff"/><path d="M3.500 4.500h6M3.500 9h5" stroke="#2b7cb8" stroke-width="1.800"/>`,
            `<rect x=".5" y="2" width="13" height="10" fill="#fff"/><path d="M2.500 8L4.500 4l2 4z" fill="#2d8a5b" stroke="none"/><path d="M7.500 4h4l-2 4z" fill="#c33" stroke="none"/>`,
            `<path d="M6 12.500H1V1h11v4M3 4h1.500M6 4h4M3 7h1.500M3 10h1.500"/><path d="M6 7h7.500l-2.500 3v3.500L9 12.500V10z" fill="#fff"/>`,
            `<rect x="1" y="1" width="12" height="12" fill="#fff"/><path d="M1 4.500h12M1 8.500h12M5 1v12M9 1v12"/>`,
            `<rect x="1" y="1" width="12" height="12" fill="#fff"/><path d="M1 1h12v4H9v8H5V5H1z" fill="#6cb2e8" stroke="none"/><path d="M1 1h12v12H1zM1 5h12M1 9h12M5 1v12M9 1v12" stroke="#41678a"/>`,
            `<text x="3" y="11.500" font-size="12" font-weight="700" fill="#2b7cb8" stroke="none">R</text>`,
            `<text x="0" y="11" font-size="11" font-weight="700" fill="#2b7cb8" stroke="none">Py</text>`,
            axis + `<path d="M3 3h7M3 7h3M3 10h5"/><circle cx="11" cy="3" r="2" ${B}/><circle cx="7" cy="7" r="1.200" fill="#fff"/>`,
            `<path d="M1 5h4v4H1zM9 1h3v3.500H9zM9 5.500h3V9H9zM9 10h3v3H9z" ${B}/><path d="M5 7h4M7 2.500h2M7 2.500v9h2"/>`,
            `<path d="M1 2h12v8H7l-3 3v-3H1z" fill="#fff" stroke="#2b7cb8"/>`,
            page + `<path d="M1 6h6v4H1z" fill="#9fc9ea" stroke="#2b7cb8"/>`,
            `<path d="M4 1h6v5c0 3-6 3-6 0zM4 2H1c0 3 1 4 3 4M10 2h3c0 3-1 4-3 4M7 8v3M4 13h6l-1-2H5z"/>`,
            page + `<path d="M4.500 12V9M7 12V6M9.500 12V8" stroke="#333" stroke-width="1.500"/>`,
            `<path d="M6 2h7.500v10H1.500V9" fill="#fff"/><text x="5" y="10" font-size="5.500" fill="#2b7cb8" stroke="none">123</text>${bolt}`,
            `<path d="M7 2h6v4M5 12H2V9"/><path d="M6 7h7.500l-2.500 3v3.500L9 12.500V10z" fill="#fff"/>${bolt}`,
            `<path d="M4 2h9v11H2V8" ${B}/><path d="M6 13l2-6 5-2" stroke="#fff"/><circle cx="3.500" cy="3.500" r="2" fill="#e6913d" stroke="#c9621a"/><circle cx="11" cy="11" r="2" fill="#e6913d" stroke="#c9621a"/>`,
            `<path d="M7 .7L13.300 7 7 13.300.7 7zM4 4l6 6M10 4l-6 6" stroke="#9a4fb0" fill="#f8effb"/>`,
            `<path d="M1 2h5l4 5-4 5H1l4-5zM7 2h2l4 5-4 5H7" stroke="#3a85c9"/>`
        ];
        document.getElementById("visuals").innerHTML = visuals.map((v) =>
            `<div class="h-[18px] flex items-center pl-[2px]"><svg class="w-[13px] h-[13px]" viewBox="0 0 14 14" fill="none" stroke="#666" stroke-width="1" font-family="Open Sans">${v}</svg></div>`).join("");

        // Field wells
        const pill = (text) => `<div class="mx-[1px] h-[16px] bg-[#e9e8e6] border border-[#d2d0ce] pl-[2px] flex items-center"><span class="flex-1">${text}</span><svg class="mr-[2px] w-[19px] h-[7px]" viewBox="0 0 19 7" fill="none" stroke="#555" stroke-width=".9"><path d="M.5 1.500l4 3.500 4-3.500M13 1l5 5M18 1l-5 5"/></svg></div>`;
        const well = (label, body, tall) => `<div class="h-[17.500px] pl-[7px] flex items-center">${label}</div>
            <div class="${tall ? "h-[24px] mb-[4.500px]" : "h-[19.500px] mb-[4.500px]"} ml-[3px] pt-[1px] border border-dashed border-[#d6d4d2] border-r-0 bg-white">${body}</div>`;
        const empty = '<div class="pl-[5px] h-[16px] flex items-center">Add data fields here</div>';
        document.getElementById("wells").innerHTML =
            well("Values", pill("Product"), true) + well("X Axis", pill("Sum of Sales"), true) +
            well("Y Axis", pill("Sum of Profit")) + well("Legend", pill("Category")) + well("Size", pill("Sum of Quantity")) +
            `<div class="-mt-[1px]">${well("Play Axis", empty)}</div><div class="-mt-[1px]">${well("Tooltips", empty)}</div>` +
            `<div class="pl-[7px] pt-[1px] text-[8.300px] tracking-[-0.250px] font-semibold">Drill through</div>
            <div class="pl-[7px] pt-[6px] flex items-center"><span class="w-[76px]">Cross-report</span><span class="w-[21px] h-[10px] rounded-full border border-[#666] bg-white flex items-center text-[6px] tracking-[-0.200px]"><i class="ml-[3px] mr-[1px] w-[5px] h-[5px] rounded-full bg-[#444]"></i>Off</span></div>`;

        // Fields: [name, kind, checked]
        const fields = [
            ["Category", "", 1], ["Channel", ""], ["City", ""], ["CustomerSegm...", ""], ["Date", "date"], ["Department", ""],
            ["Discount", "sum"], ["Governorate", ""], ["IsHighProfit", ""], ["ISOWeek", "sum"], ["Month", "sum"], ["MonthName", ""],
            ["Orders", "sum"], ["Product", "", 1], ["Profit", "sum", 1], ["ProfitMargin", "sum"], ["Quantity", "sum", 1], ["Region", ""],
            ["Returns", "sum"], ["Sales", "sum", 1], ["SalesBand", ""], ["TargetProfit", "sum"], ["TargetSales", "sum"], ["Year", "sum"], ["YearMonth", "date"]
        ];
        const kinds = {
            "": "",
            sum: '<path d="M7.500 2.500V1h-7L4 4.500.5 8h7V6.500"/>',
            date: '<rect x=".5" y=".5" width="8" height="8" rx="1.500"/><path d="M.5 2.500h8M2.500 4.500h4M2.500 6.500h4"/>'
        };
        document.getElementById("fields").innerHTML = fields.map(([name, kind, on]) => `
            <div class="h-[16px] flex items-center whitespace-nowrap">
                <svg class="ml-[20px] mr-[4px] w-[5px] h-[8px]" viewBox="0 0 5 8" fill="none" stroke="#777">${kind === "date" ? '<path d="M.7.7L4.300 4 .7 7.300"/>' : ""}</svg>
                <svg class="w-[9px] h-[9px]" viewBox="0 0 9 9" fill="none">${on ? '<rect x=".5" y=".5" width="8" height="8" rx="1" fill="#117856"/><path d="M2.300 4.500L4 6.200l3-3" stroke="#fff"/>' : '<rect x="1" y="1" width="7" height="7" rx="1" stroke="#777" stroke-width=".9" fill="#fff"/>'}</svg>
                <svg class="ml-[4px] mr-[3.500px] w-[9px] h-[9px]" viewBox="0 0 9 9" fill="none" stroke="#555">${kinds[kind]}</svg>
                <span class="flex-1">${name}</span>
                ${name === "Quantity" ? '<span class="mr-[3px] mb-[3px] tracking-[0.800px]">...</span>' : ""}
            </div>`).join("");

        // Taskbar apps on a 16x16 grid, "run" marks the open ones
        const apps = [
            ['<path d="M6 1h10v10H6z" fill="#f4f4f4"/><path d="M1 5h9v6h2v4H1z" fill="#333"/><path d="M4 3h8v8H4z" fill="#bbb"/>'],
            ['<circle cx="8" cy="8" r="7.500" fill="#1c7fc4"/><path d="M1 6C3-1 14-1 15.500 7c0 4-5 4-6 2 1-3-3-5-8.500-3z" fill="#4cc38a"/><path d="M6 8c0 5 5 5 8 4-3 4-9 3-9-1z" fill="#e9f3fb"/><path d="M0 10.500h7V16H0z" fill="#c5782a"/>'],
            ['<path d="M5 4V1h6v3" fill="none" stroke="#1f6fae" stroke-width="1.300"/><rect x="0" y="3.500" width="16" height="12.500" rx="2" fill="#1d4468"/><path d="M5 6h2.700v2.700H5z" fill="#f0653a"/><path d="M8.300 6H11v2.700H8.300z" fill="#7db83a"/><path d="M5 9.300h2.700V12H5z" fill="#2fa3e6"/><path d="M8.300 9.300H11V12H8.300z" fill="#f6c02c"/>'],
            ['<path d="M3 4l6-4 7 4v10H4z" fill="#1d78c4"/><path d="M5 10l11-5v10H4z" fill="#4db2ee"/><rect x="0" y="4" width="9" height="9" rx="1" fill="#0f5ea8"/><circle cx="4.500" cy="8.500" r="2.300" fill="none" stroke="#fff" stroke-width="1.200"/>'],
            ['<path d="M0 1.500h6l2 2h8v11H0z" fill="#f3b73c"/><path d="M0 5h16v9.500H0z" fill="#fbd368"/><path d="M3 10h10v4.500H3z" fill="#2f86c8"/>', 1],
            ['<circle cx="8" cy="8.500" r="7.300" fill="#f0623a"/><path d="M8 1c5 1 8 5 7 10-2-5-4-3-7-5z" fill="#fbc233"/><circle cx="8" cy="9" r="3.300" fill="#7a4fc8"/>'],
            ['<path d="M5 1h6l2 5H9l-3 8H2C-1 11 3 1 5 1z" fill="#2a7fd4"/><path d="M11 15H6l-2-4h3l3-7h4c4 2-1 11-3 11z" fill="#d0549a"/><path d="M1 9h6l-2 5H2z" fill="#8ac45a"/><path d="M11 15H6l-1-3h5z" fill="#ee8350"/>'],
            ['<circle cx="5" cy="3" r="2.300" fill="#7b83eb"/><circle cx="12" cy="3.500" r="2" fill="#5059c9"/><rect x="3" y="6" width="13" height="9" rx="3" fill="#6a72dc"/><rect x="0" y="6" width="9" height="9" rx="1" fill="#464eb8"/><path d="M2.500 8.500h4M4.500 8.500V13" stroke="#fff" stroke-width="1.200"/>'],
            ['<circle cx="8" cy="8" r="5" fill="none" stroke="#ea3c8e" stroke-width="5"/><path d="M8 3a5 5 0 0 1 5 5" fill="none" stroke="#35b6ec" stroke-width="5"/><path d="M3 8a5 5 0 0 1 5-5" fill="none" stroke="#62c94c" stroke-width="5"/><path d="M8 13a5 5 0 0 1-5-5" fill="none" stroke="#f5a12a" stroke-width="5"/><circle cx="8" cy="8" r="2.500" fill="#fff"/>'],
            ['<g fill="none" stroke="#2fa8a6" stroke-width="2"><path d="M14 2C5 0 0 7 3 14M15 5C8 4 5 8 7 14M15 8.500c-4 0-5 3-4 6"/></g>'],
            ['<circle cx="7" cy="9" r="7" fill="#34a853"/><path d="M1 5C4 0 12 1 13.500 6H7z" fill="#ea4335"/><path d="M14 8c0 5-3 8-7 8l3-6z" fill="#fbbc05"/><circle cx="7" cy="9" r="3.200" fill="#3b7ded" stroke="#fff" stroke-width="1"/><circle cx="12.500" cy="3.500" r="4.500" fill="#333"/><circle cx="12.500" cy="2.500" r="1.500" fill="#aaa"/><path d="M10 6.500c1-3 4-3 5 0z" fill="#ddd"/>', 1],
            ['<circle cx="8.500" cy="8" r="7.300" fill="#d9543a"/><path d="M8.500.7A7.300 7.300 0 0 1 15.800 8H8.500z" fill="#f08f72"/><rect x="0" y="5" width="8.500" height="8.500" rx="1" fill="#b5302e"/><path d="M3 12V7h2c2 0 2 3 0 3H3" fill="none" stroke="#fff" stroke-width="1.200"/>', 1],
            ['<circle cx="8" cy="8" r="7.800" fill="#1b4f9c"/><circle cx="8" cy="8" r="5.300" fill="#e5eefb"/><circle cx="8" cy="7.500" r="2" fill="none" stroke="#1b4f9c" stroke-width="1.300"/><path d="M8 2.500v2M3.500 6l2 1M12.500 6l-2 1M4.500 12h7" stroke="#1b4f9c" stroke-width="1.300"/>', 1],
            ['<rect x="3" y="1" width="13" height="14.500" rx="2" fill="#35a3ee"/><path d="M3 9h13v5H3z" fill="#1660c0"/><rect x="0" y="5.500" width="8.500" height="8.500" rx="1" fill="#174ea6"/><path d="M1.500 8l1.400 4 1.300-3.500L5.500 12 7 8" fill="none" stroke="#fff"/>', 1]
        ];
        document.getElementById("apps").innerHTML = apps.map(([art, run]) =>
            `<div class="relative w-[29.430px] h-[32px] flex items-center justify-center"><svg class="w-[16px] h-[16px]" viewBox="0 0 16 16">${art}</svg>${run ? '<i class="absolute bottom-[4px] w-[4px] h-[1.500px] bg-[#777]"></i>' : ""}</div>`).join("") +
            `<div class="relative ml-[2px] w-[25px] h-[25px] bg-[#fbf3e4] rounded-[2px] flex items-center justify-center"><svg class="w-[14px] h-[16px]" viewBox="0 0 14 16"><path d="M8 0h6v16H8z" fill="#d69a12"/><path d="M4 4h6v12H4z" fill="#eeb92a"/><path d="M0 8h6v8H0z" fill="#f8d656"/></svg><i class="absolute bottom-0 w-[10px] h-[1.500px] bg-[#1a6fb5]"></i></div>`;
    </script>
</body>
</html>
